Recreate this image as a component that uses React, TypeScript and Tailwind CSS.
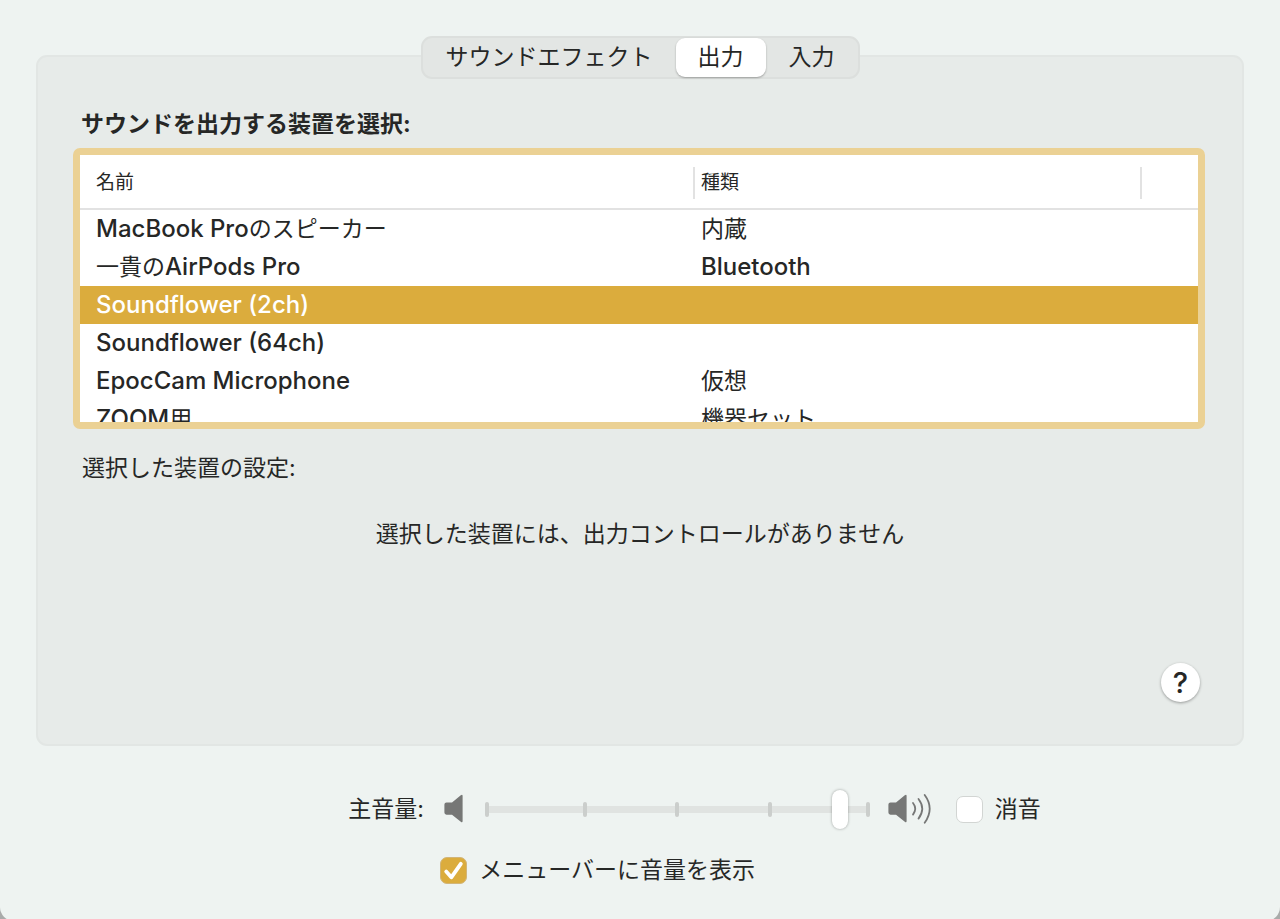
import { useState } from "react";

const tabs = ["サウンドエフェクト", "出力", "入力"];

const devices = [
  { name: "MacBook Proのスピーカー", kind: "内蔵" },
  { name: "一貴のAirPods Pro", kind: "Bluetooth" },
  { name: "Soundflower (2ch)", kind: "" },
  { name: "Soundflower (64ch)", kind: "" },
  { name: "EpocCam Microphone", kind: "仮想" },
  { name: "ZOOM用", kind: "機器セット" },
];

const ticks = [0, 25.8, 50, 74.2, 100];

// Latin runs are set slightly larger and heavier than the Japanese around them.
function Mixed({ text }: { text: string }) {
  return (
    <>
      {text.split(/([\x20-\x7e]+)/).map((part, i) =>
        i % 2 ? (
          <span key={i} className="text-[24px] font-medium">
            {part}
          </span>
        ) : (
          part
        ),
      )}
    </>
  );
}

function Speaker({ waves }: { waves?: boolean }) {
  return (
    <svg
      className={waves ? "h-[30px] w-[44px]" : "h-[30px] w-[20px]"}
      viewBox={waves ? "0 0 44 30" : "0 0 20 30"}
      fill="none"
      aria-hidden="true"
    >
      <path
        d="M2.5 8.5H8L16.8 1.3Q18.6 0 18.6 2V27Q18.6 29 16.8 27.7L8 20.7H2.5Q.4 20.7 .4 18.6V10.6Q.4 8.5 2.5 8.5Z"
        fill="#767776"
      />
      {waves && (
        <g stroke="#767776" strokeWidth="1.8" strokeLinecap="round">
          <path d="M25 9Q29.4 14.6 25 20.6" />
          <path d="M30.5 5Q38 14.6 30.5 24.6" />
          <path d="M36.7 1Q46.7 14.6 36.7 28.8" />
        </g>
      )}
    </svg>
  );
}

function CheckBox({ id, checked, onChange }: { id: string; checked: boolean; onChange: () => void }) {
  return (
    <span className="relative grid size-[27px] shrink-0 place-items-center">
      <input
        id={id}
        type="checkbox"
        checked={checked}
        onChange={onChange}
        className="size-[27px] appearance-none rounded-[7px] border border-[#d2d5d3] bg-white checked:border-[#d2b578] checked:bg-[#dbac3d]"
      />
      {checked && (
        <svg className="pointer-events-none absolute inset-0" viewBox="0 0 27 27" fill="none" aria-hidden="true">
          <path d="M6.2 14.6L11.3 20.3L20.8 6.8" stroke="#fff" strokeWidth="3.8" strokeLinecap="round" strokeLinejoin="round" />
        </svg>
      )}
    </span>
  );
}

export default function App() {
  const [tab, setTab] = useState(1);
  const [selected, setSelected] = useState(2);
  const [volume, setVolume] = useState(94);
  const [muted, setMuted] = useState(false);
  const [inMenuBar, setInMenuBar] = useState(true);

  return (
    <div className="min-h-screen bg-[#a9abaa] font-['Inter','Noto_Sans_CJK_JP',sans-serif] text-[23px] leading-[38px] text-[#262726]">
      <main className="flex min-h-screen flex-col rounded-b-[14px] bg-[#eef3f1] px-9 pt-9 pb-8">
        <div
          role="tablist"
          className="relative z-10 mx-auto flex h-[43px] items-center rounded-[11px] border-2 border-[#dcdfdd] bg-[#e3e6e4]"
        >
          {tabs.map((label, i) => (
            <button
              key={label}
              type="button"
              role="tab"
              aria-selected={tab === i}
              onClick={() => setTab(i)}
              className={
                tab === i
                  ? "h-[39px] rounded-[9px] bg-white px-[22px] pb-px shadow-[0_1px_2px_rgba(0,0,0,0.3)]"
                  : "h-[39px] px-[23px] pb-px"
              }
            >
              {label}
            </button>
          ))}
        </div>

        <section className="-mt-6 flex min-h-[691px] flex-col rounded-[11px] border-2 border-[#e2e6e4] bg-[#e7ebe9] pt-12 pr-[37px] pb-[42px] pl-[35px]">
          <h1 className="pl-2 font-bold">サウンドを出力する装置を選択:</h1>
          <div className="mt-[5px] h-[281px] shrink-0 overflow-hidden rounded-[7px] border-[7px] border-[#ebd194] bg-white">
            <table className="w-full table-fixed border-collapse text-left">
              <colgroup>
                <col className="w-[55%]" />
                <col className="w-[40%]" />
                <col className="w-[5%]" />
              </colgroup>
              <thead className="text-[19px] leading-[32px]">
                <tr className="h-[54px] border-b-2 border-[#e2e2e2]">
                  <th className="p-0 pt-[2px] font-normal">
                    <div className="border-r-2 border-[#e2e2e2] pl-4">名前</div>
                  </th>
                  <th className="p-0 pt-[2px] font-normal">
                    <div className="border-r-2 border-[#e2e2e2] pl-[6px]">種類</div>
                  </th>
                  <th className="p-0" />
                </tr>
              </thead>
              <tbody>
                {devices.map((d, i) => (
                  <tr
                    key={d.name}
                    aria-selected={selected === i}
                    onClick={() => setSelected(i)}
                    className={selected === i ? "h-[38px] bg-[#dbac3d] text-white" : "h-[38px]"}
                  >
                    <td className="p-0 pl-4">
                      <Mixed text={d.name} />
                    </td>
                    <td className="p-0 pl-[6px]">
                      <Mixed text={d.kind} />
                    </td>
                    <td className="p-0" />
                  </tr>
                ))}
              </tbody>
            </table>
          </div>
          <h2 className="mt-5 pl-[9px]">選択した装置の設定:</h2>
          <p className="mt-7 pl-[2px] text-center">選択した装置には、出力コントロールがありません</p>
          <button
            type="button"
            aria-label="ヘルプ"
            className="mt-auto mr-[5px] grid size-[39px] place-items-center self-end rounded-full bg-white text-[29px] font-medium shadow-[0_1px_3px_rgba(0,0,0,0.35)]"
          >
            ?
          </button>
        </section>

        <div className="mx-auto mt-[43px] w-fit pl-[109px]">
          <div className="flex items-center">
            <label htmlFor="volume">主音量:</label>
            <span className="ml-5 flex">
              <Speaker />
            </span>
            <div className="relative ml-[21px] flex h-10 w-[385px] items-center">
              <div className="absolute inset-x-0 h-[7px] bg-[#e0e3e1]" />
              <div className="absolute inset-x-0 mr-1 h-[15px]">
                {ticks.map((t) => (
                  <span key={t} className="absolute h-[15px] w-1 rounded-sm bg-[#cbcecc]" style={{ left: `${t}%` }} />
                ))}
              </div>
              <input
                id="volume"
                type="range"
                min={0}
                max={100}
                value={volume}
                onChange={(e) => setVolume(Number(e.target.value))}
                className="relative h-10 w-full appearance-none bg-transparent [&::-webkit-slider-thumb]:h-[39px] [&::-webkit-slider-thumb]:w-4 [&::-webkit-slider-thumb]:appearance-none [&::-webkit-slider-thumb]:rounded-full [&::-webkit-slider-thumb]:bg-white [&::-webkit-slider-thumb]:shadow-[0_0_3px_rgba(0,0,0,0.35)]"
              />
            </div>
            <span className="ml-[18px] flex">
              <Speaker waves />
            </span>
            <div className="ml-6 flex items-center gap-3">
              <CheckBox id="mute" checked={muted} onChange={() => setMuted(!muted)} />
              <label htmlFor="mute">消音</label>
            </div>
          </div>
          <div className="mt-[22px] flex items-center gap-3 pl-[92px]">
            <CheckBox id="menubar" checked={inMenuBar} onChange={() => setInMenuBar(!inMenuBar)} />
            <label htmlFor="menubar">メニューバーに音量を表示</label>
          </div>
        </div>
      </main>
    </div>
  );
}
